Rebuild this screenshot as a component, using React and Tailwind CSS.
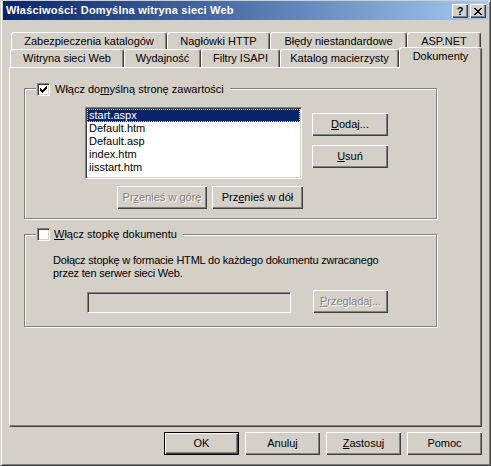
import React from 'react'

// klasyczne obramowania Windows 2000
const face = 'bg-[#d4d0c8]'
const raisedBtn = 'shadow-[inset_1px_1px_#fff,inset_-1px_-1px_#404040,inset_-2px_-2px_#808080]'
const sunken =
  'border border-t-[#808080] border-l-[#808080] border-r-white border-b-white shadow-[inset_1px_1px_#404040,inset_-1px_-1px_#d4d0c8]'

const CheckMark = () => {
  const cols = [2, 3, 4, 3, 2, 1, 0]
  return (
    <svg width="7" height="7" viewBox="0 0 7 7" shapeRendering="crispEdges">
      {cols.map((r, i) => (
        <rect key={i} x={i} y={r} width="1" height="3" fill="#000" />
      ))}
    </svg>
  )
}

const Checkbox = ({ checked }) => (
  <div className={`w-[13px] h-[13px] bg-white flex items-center justify-center ${sunken}`}>
    {checked && <CheckMark />}
  </div>
)

const CloseGlyph = () => {
  const rows = [0, 1, 2, 3, 4, 5, 6]
  return (
    <svg width="8" height="7" viewBox="0 0 8 7" shapeRendering="crispEdges">
      {rows.map((r) => (
        <g key={r}>
          <rect x={r} y={r} width="2" height="1" fill="#000" />
          <rect x={6 - r} y={r} width="2" height="1" fill="#000" />
        </g>
      ))}
    </svg>
  )
}

const Button = ({ className = '', disabled, isDefault, children }) => (
  <div
    className={`h-[23px] flex items-center justify-center ${face} ${raisedBtn} ${
      isDefault ? 'border border-black' : ''
    } ${disabled ? 'text-[#808080] [text-shadow:1px_1px_0_#fff]' : 'text-black'} ${className}`}
  >
    {children}
  </div>
)

const Tab = ({ className = '', selected, children }) => (
  <div
    className={`flex items-center justify-center ${face} border-t border-l border-r border-t-white border-l-white border-r-[#404040] rounded-t-[3px] shadow-[inset_-1px_0_#808080] ${
      selected ? 'relative z-10 -mt-[2px] h-[21px] pb-[3px]' : ''
    } ${className}`}
  >
    {children}
  </div>
)

const Group = ({ legend, legendTop, className = '', children }) => (
  <div className={`relative border border-[#808080] shadow-[inset_1px_1px_#fff,1px_1px_#fff] ${className}`}>
    <div className={`absolute left-[11px] flex items-center gap-[5px] pl-[1px] pr-[6px] ${face} ${legendTop}`}>
      {legend}
    </div>
    {children}
  </div>
)

const files = ['start.aspx', 'Default.htm', 'Default.asp', 'index.htm', 'iisstart.htm']

export default function App() {
  return (
    <div
      className={`w-[491px] h-[466px] ${face} border border-t-[#d4d0c8] border-l-[#d4d0c8] border-r-[#404040] border-b-[#404040] shadow-[inset_1px_1px_#fff,inset_-1px_-1px_#808080] px-[2px] font-['Liberation_Sans',Arial,sans-serif] text-[11px] text-black leading-[13px]`}
    >
      {/* pasek tytułu */}
      <div className="h-[19px] flex items-center pl-[3px] pr-[2px] bg-linear-to-r from-[#0a246a] to-[#a6caf0]">
        <span className="text-white font-bold tracking-[0.2px] flex-1">
          Właściwości: Domyślna witryna sieci Web
        </span>
        <div className="self-start mt-[3px] flex gap-[2px]">
          <div className={`w-[16px] h-[14px] flex items-center justify-center font-bold text-[11px] leading-none ${face} ${raisedBtn}`}>
            ?
          </div>
          <div className={`w-[16px] h-[14px] flex items-center justify-center ${face} ${raisedBtn}`}>
            <CloseGlyph />
          </div>
        </div>
      </div>

      {/* zakładki */}
      <div className="mt-[12px] ml-[8px] flex h-[17px]">
        <Tab className="w-[156px] h-[17px]">Zabezpieczenia katalogów</Tab>
        <Tab className="w-[103px] h-[17px]">Nagłówki HTTP</Tab>
        <Tab className="w-[137px] h-[17px]">Błędy niestandardowe</Tab>
        <Tab className="w-[74px] h-[17px]">ASP.NET</Tab>
      </div>
      <div className="ml-[7px] flex items-start h-[18px]">
        <Tab className="w-[114px] h-[18px]">Witryna sieci Web</Tab>
        <Tab className="w-[77px] h-[18px]">Wydajność</Tab>
        <Tab className="w-[79px] h-[18px]">Filtry ISAPI</Tab>
        <Tab className="w-[119px] h-[18px]">Katalog macierzysty</Tab>
        <Tab selected className="w-[83px]">
          Dokumenty
        </Tab>
      </div>

      {/* panel */}
      <div className="ml-[6px] w-[473px] h-[360px] border border-t-white border-l-white border-r-[#404040] border-b-[#404040] shadow-[inset_-1px_-1px_#808080] pl-[14px] pt-[20px]">
        <Group
          className="w-[413px] h-[131px]"
          legendTop="-top-[6px]"
          legend={
            <>
              <Checkbox checked />
              <span>
                Włącz do<span className="underline">m</span>yślną stronę zawartości
              </span>
            </>
          }
        >
          <div className="pl-[60px] pt-[18px]">
            <div className="flex items-start">
              <div className={`w-[217px] h-[72px] bg-white p-[1px] ${sunken}`}>
                {files.map((f, i) => (
                  <div
                    key={f}
                    className={`h-[13px] leading-[11px] px-[1px] ${
                      i === 0
                        ? 'bg-[#0a246a] text-white border border-dotted border-[#d0d0d0]'
                        : 'border border-transparent'
                    }`}
                  >
                    {f}
                  </div>
                ))}
              </div>
              <div className="ml-[10px] mt-[6px] flex flex-col gap-[9px]">
                <Button className="w-[76px]">
                  <span className="underline">D</span>odaj...
                </Button>
                <Button className="w-[76px]">
                  <span className="underline">U</span>suń
                </Button>
              </div>
            </div>
            <div className="mt-[7px] ml-[32px] flex gap-[5px]">
              <Button disabled className="w-[90px]">
                <span>
                  Pr<span className="underline">z</span>enieś w górę
                </span>
              </Button>
              <Button className="w-[91px]">
                <span>
                  Prz<span className="underline">e</span>nieś w dół
                </span>
              </Button>
            </div>
          </div>
        </Group>

        <Group
          className="mt-[15px] w-[413px] h-[93px]"
          legendTop="-top-[7px]"
          legend={
            <>
              <Checkbox />
              <span className="-ml-[1px]">
                <span className="underline">W</span>łącz stopkę dokumentu
              </span>
            </>
          }
        >
          <div className="ml-[28px] pt-[19px] tracking-[-0.2px]">
            Dołącz stopkę w formacie HTML do każdego dokumentu zwracanego
            <br />
            przez ten serwer sieci Web.
          </div>
          <div className="ml-[62px] mt-[10px] flex items-end gap-[22px]">
            <div className={`w-[204px] h-[21px] ${face} ${sunken}`} />
            <Button disabled className="w-[75px]">
              <span>
                <span className="underline">P</span>rzeglądaj...
              </span>
            </Button>
          </div>
        </Group>
      </div>

      {/* przyciski okna */}
      <div className="mt-[5px] mr-[6px] flex justify-end gap-[6px]">
        <Button isDefault className="w-[75px]">
          OK
        </Button>
        <Button className="w-[75px]">Anuluj</Button>
        <Button className="w-[75px]">
          <span>
            <span className="underline">Z</span>astosuj
          </span>
        </Button>
        <Button className="w-[75px]">Pomoc</Button>
      </div>
    </div>
  )
}
